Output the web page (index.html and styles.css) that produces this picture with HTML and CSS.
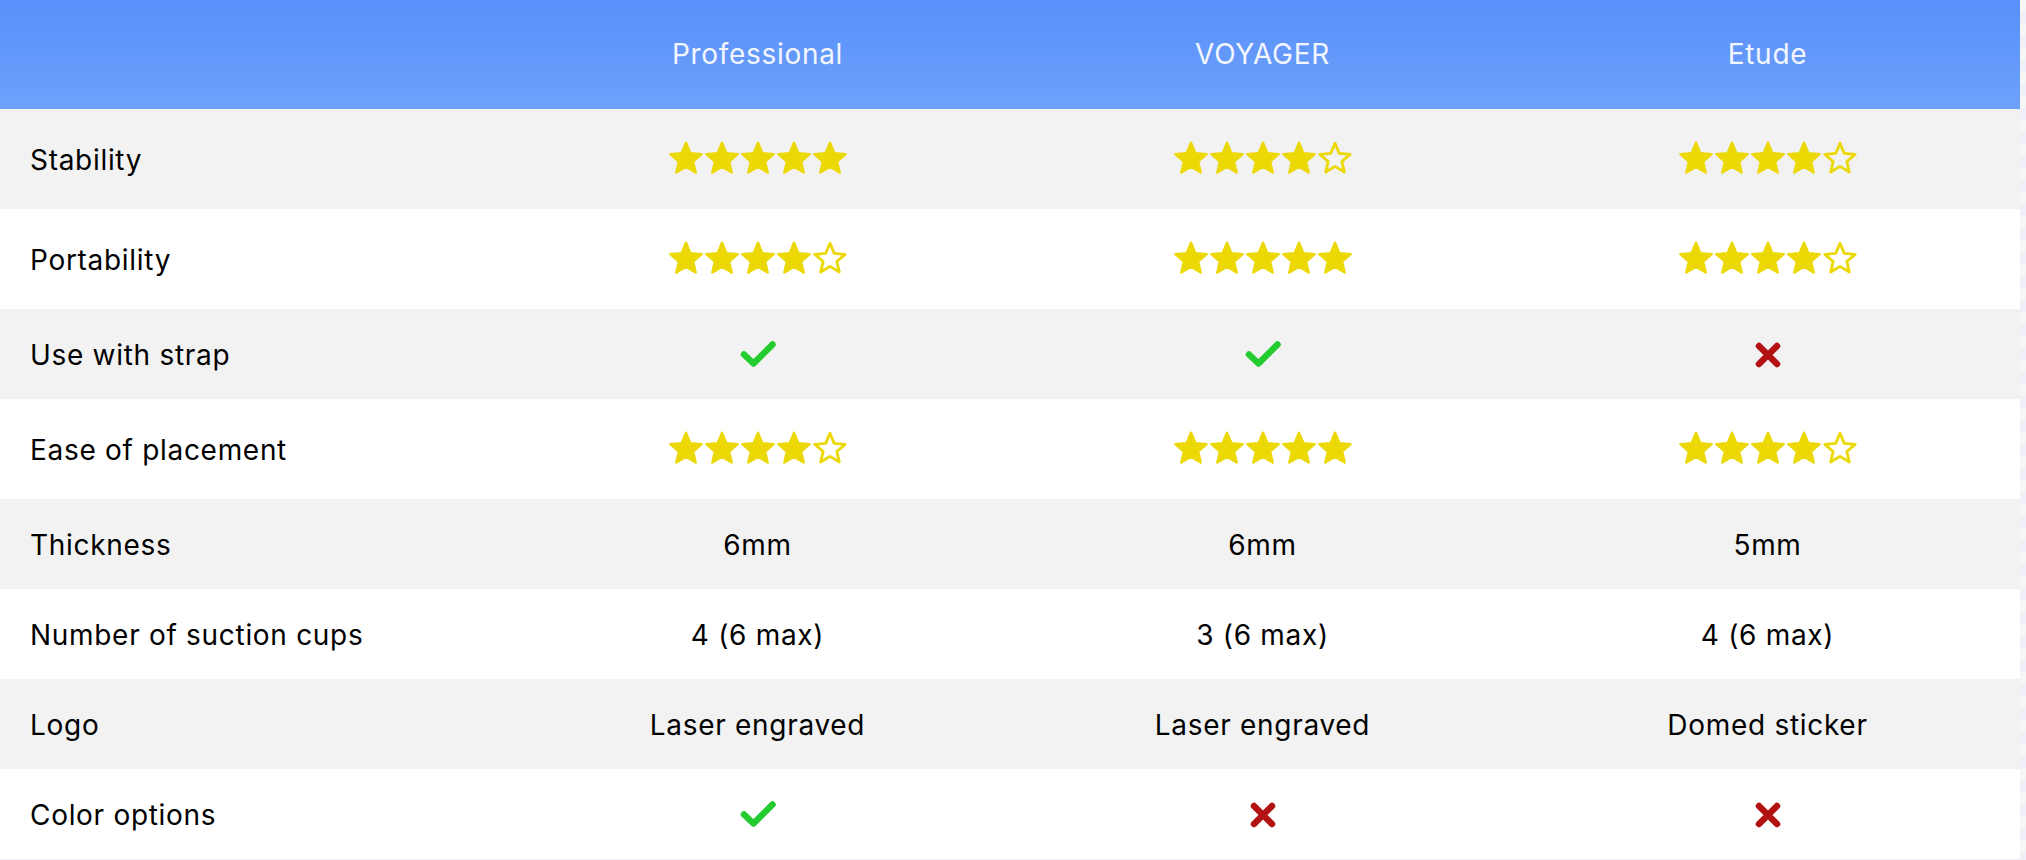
FILE: index.html
```html
<!DOCTYPE html>
<html lang="en">
<head>
<meta charset="utf-8">
<title>Comparison</title>
<link rel="stylesheet" href="styles.css">
</head>
<body>
<svg class="defs" width="0" height="0" aria-hidden="true">
  <symbol id="star" viewBox="0 0 24 24"><polygon points="12,1.8 14.94,8.76 22.46,9.4 16.76,14.35 18.47,21.7 12,17.8 5.53,21.7 7.24,14.35 1.54,9.4 9.06,8.76" fill="currentColor" stroke="currentColor" stroke-width="1.6" stroke-linejoin="round"/></symbol>
  <symbol id="star-o" viewBox="0 0 24 24"><polygon points="12,2.2 14.85,8.95 22.1,9.55 16.55,14.35 18.2,21.3 12,17.6 5.8,21.3 7.45,14.35 1.9,9.55 9.15,8.95" fill="none" stroke="currentColor" stroke-width="1.9" stroke-linejoin="round"/></symbol>
  <symbol id="check" viewBox="0 0 36 28"><polyline points="4,14.5 13.5,23.5 32.5,4.5" fill="none" stroke="currentColor" stroke-width="6.5" stroke-linecap="round" stroke-linejoin="round"/></symbol>
  <symbol id="cross" viewBox="0 0 26 26"><path d="M4 4 L22 22 M22 4 L4 22" fill="none" stroke="currentColor" stroke-width="6.5" stroke-linecap="round"/></symbol>
</svg>
<table class="compare">
  <thead>
    <tr>
      <th class="label-col"></th>
      <th>Professional</th>
      <th>VOYAGER</th>
      <th>Etude</th>
    </tr>
  </thead>
  <tbody>
    <tr class="tall alt">
      <td class="label">Stability</td>
      <td><span class="stars"><svg><use href="#star"/></svg><svg><use href="#star"/></svg><svg><use href="#star"/></svg><svg><use href="#star"/></svg><svg><use href="#star"/></svg></span></td>
      <td><span class="stars"><svg><use href="#star"/></svg><svg><use href="#star"/></svg><svg><use href="#star"/></svg><svg><use href="#star"/></svg><svg><use href="#star-o"/></svg></span></td>
      <td><span class="stars"><svg><use href="#star"/></svg><svg><use href="#star"/></svg><svg><use href="#star"/></svg><svg><use href="#star"/></svg><svg><use href="#star-o"/></svg></span></td>
    </tr>
    <tr class="tall">
      <td class="label">Portability</td>
      <td><span class="stars"><svg><use href="#star"/></svg><svg><use href="#star"/></svg><svg><use href="#star"/></svg><svg><use href="#star"/></svg><svg><use href="#star-o"/></svg></span></td>
      <td><span class="stars"><svg><use href="#star"/></svg><svg><use href="#star"/></svg><svg><use href="#star"/></svg><svg><use href="#star"/></svg><svg><use href="#star"/></svg></span></td>
      <td><span class="stars"><svg><use href="#star"/></svg><svg><use href="#star"/></svg><svg><use href="#star"/></svg><svg><use href="#star"/></svg><svg><use href="#star-o"/></svg></span></td>
    </tr>
    <tr class="short alt">
      <td class="label">Use with strap</td>
      <td><svg class="icon-check"><use href="#check"/></svg></td>
      <td><svg class="icon-check"><use href="#check"/></svg></td>
      <td><svg class="icon-cross"><use href="#cross"/></svg></td>
    </tr>
    <tr class="tall">
      <td class="label">Ease of placement</td>
      <td><span class="stars"><svg><use href="#star"/></svg><svg><use href="#star"/></svg><svg><use href="#star"/></svg><svg><use href="#star"/></svg><svg><use href="#star-o"/></svg></span></td>
      <td><span class="stars"><svg><use href="#star"/></svg><svg><use href="#star"/></svg><svg><use href="#star"/></svg><svg><use href="#star"/></svg><svg><use href="#star"/></svg></span></td>
      <td><span class="stars"><svg><use href="#star"/></svg><svg><use href="#star"/></svg><svg><use href="#star"/></svg><svg><use href="#star"/></svg><svg><use href="#star-o"/></svg></span></td>
    </tr>
    <tr class="short alt">
      <td class="label">Thickness</td>
      <td>6mm</td>
      <td>6mm</td>
      <td>5mm</td>
    </tr>
    <tr class="short">
      <td class="label">Number of suction cups</td>
      <td>4 (6 max)</td>
      <td>3 (6 max)</td>
      <td>4 (6 max)</td>
    </tr>
    <tr class="short alt">
      <td class="label">Logo</td>
      <td>Laser engraved</td>
      <td>Laser engraved</td>
      <td>Domed sticker</td>
    </tr>
    <tr class="short">
      <td class="label">Color options</td>
      <td><svg class="icon-check"><use href="#check"/></svg></td>
      <td><svg class="icon-cross"><use href="#cross"/></svg></td>
      <td><svg class="icon-cross"><use href="#cross"/></svg></td>
    </tr>
  </tbody>
</table>
</body>
</html>
```

FILE: styles.css
```css
* {
  box-sizing: border-box;
}

html,
body {
  margin: 0;
  padding: 0;
}

body {
  width: 2026px;
  height: 860px;
  overflow: hidden;
  background: repeating-linear-gradient(180deg, #f6f6f7 0 12px, #eff0f8 12px 24px);
  font-family: Inter, "Open Sans", sans-serif;
  color: #000;
}

.defs {
  position: absolute;
  width: 0;
  height: 0;
  overflow: hidden;
}

.compare {
  width: 2020px;
  border-collapse: collapse;
  table-layout: fixed;
  background: #fff;
}

.compare th,
.compare td {
  padding: 0;
  text-align: center;
  vertical-align: middle;
  font-size: 28px;
  letter-spacing: 0.7px;
  font-weight: 400;
  line-height: 1.2;
}

.compare td {
  padding-top: 4px;
}

.compare th {
  height: 109px;
  color: #f3f6ff;
  background: linear-gradient(180deg, #5890fa 0%, #6ea1fb 100%);
}

.compare .label {
  text-align: left;
  padding-left: 30px;
}

.tall td {
  height: 100px;
}

.short td {
  height: 90px;
}

.alt td {
  background: #f2f2f2;
}

.stars {
  display: inline-flex;
  color: #ebd805;
  margin-bottom: 6px;
  vertical-align: middle;
}

.stars svg {
  width: 36px;
  height: 36px;
  display: block;
}

.icon-check {
  width: 36px;
  height: 28px;
  color: #24cc30;
  vertical-align: middle;
  margin-bottom: 5px;
}

.icon-cross {
  width: 26px;
  height: 26px;
  color: #b31212;
  vertical-align: middle;
  margin-bottom: 5px;
}
```
